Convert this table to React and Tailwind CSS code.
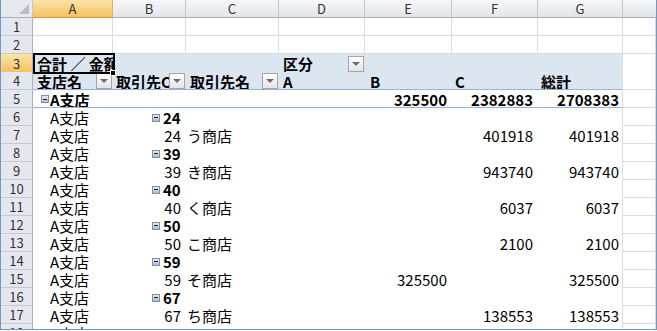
import clsx from 'clsx';

// Spreadsheet view of a pivot table: 合計 / 金額 by 支店名 × 取引先, split by 区分
const COLS = 'grid grid-cols-[32px_80px_73px_93px_86px_87px_86px_85px_1fr]';

const shops = [
  { code: 24, name: 'う商店', e: '', f: '401918', g: '401918' },
  { code: 39, name: 'き商店', e: '', f: '943740', g: '943740' },
  { code: 40, name: 'く商店', e: '', f: '6037', g: '6037' },
  { code: 50, name: 'こ商店', e: '', f: '2100', g: '2100' },
  { code: 59, name: 'そ商店', e: '325500', f: '', g: '325500' },
  { code: 67, name: 'ち商店', e: '', f: '138553', g: '138553' },
];

function RowNum({ n, active }) {
  return (
    <div
      className={clsx(
        'flex items-center justify-center border-r border-b border-r-[#a9b1bd] text-[13px] leading-[17px] text-[#333]',
        active ? 'border-b-[#d9a64e] bg-linear-to-b from-[#fbe3a8] to-[#f2c260]' : 'border-b-[#c3c9d1] bg-[#e4e8ee]'
      )}
    >
      {n}
    </div>
  );
}

function ColHead({ label, active, last }) {
  return (
    <div
      className={clsx(
        'flex items-center justify-center border-b text-[13px] leading-[17px] text-[#333]',
        !last && 'border-r',
        active
          ? 'border-b-[#e9973a] border-r-[#e1b25e] bg-linear-to-b from-[#fbe3a8] to-[#f2c260]'
          : 'border-b-[#a9b1bd] border-r-[#c5c9cf] bg-linear-to-b from-[#f6f7f9] to-[#e2e5e9]'
      )}
    >
      {label}
    </div>
  );
}

// plain worksheet cell with gridlines
function Cell() {
  return <div className="border-r border-b border-[#dadcdd] bg-white" />;
}

// pivot table cell: no gridlines, optional blue rule under it
function P({ children, head, line, edge, className }) {
  return (
    <div
      className={clsx(
        'flex h-full min-w-0 items-start overflow-hidden whitespace-nowrap pt-[1px]',
        head ? 'bg-[#dce6f1]' : 'bg-white',
        line && 'border-b border-b-[#95b3d7]',
        edge && 'border-r border-r-[#dadcdd]',
        className
      )}
    >
      {children}
    </div>
  );
}

function Drop() {
  return (
    <span className="ml-auto mr-[1px] flex h-[16px] w-[16px] shrink-0 items-center justify-center self-center border border-[#a5a5a5] bg-linear-to-b from-white to-[#e4e4e4]">
      <span className="h-0 w-0 border-x-[4px] border-t-[4px] border-x-transparent border-t-[#6e6e6e]" />
    </span>
  );
}

function Minus({ className }) {
  return (
    <span className={clsx('flex h-[8px] w-[8px] shrink-0 items-center justify-center self-center border border-[#7f90a9] bg-linear-to-b from-[#e4eaf2] to-[#aebcd0]', className)}>
      <span className="h-[1px] w-[4px] bg-[#1b2535]" />
    </span>
  );
}

export default function App() {
  return (
    <div className="h-[331px] w-[657px] overflow-hidden bg-white font-['Noto_Sans_CJK_JP',sans-serif] text-[15px] leading-[18px] text-black">
      <div className="h-[330px] overflow-hidden border-x border-b border-[#7596c4]">
        {/* column letters */}
        <div className={clsx(COLS, 'h-[18px]')}>
          <div className="relative border-r border-b border-r-[#c5c9cf] border-b-[#a9b1bd] bg-[#e6e9ee]">
            <span className="absolute right-[3px] bottom-[3px] h-0 w-0 border-b-[10px] border-l-[10px] border-b-[#b8bdc4] border-l-transparent" />
          </div>
          <ColHead label="A" active />
          <ColHead label="B" />
          <ColHead label="C" />
          <ColHead label="D" />
          <ColHead label="E" />
          <ColHead label="F" />
          <ColHead label="G" />
          <ColHead label="" last />
        </div>

        {[1, 2].map((n) => (
          <div key={n} className={clsx(COLS, 'h-[18px]')}>
            <RowNum n={n} />
            <Cell /><Cell /><Cell /><Cell /><Cell /><Cell /><Cell /><Cell />
          </div>
        ))}

        {/* pivot header: value field + column field */}
        <div className={clsx(COLS, 'h-[18px]')}>
          <RowNum n={3} active />
          <div className="relative z-10 h-full bg-[#dce6f1]">
            <span className="block overflow-hidden whitespace-nowrap pt-[1px] pl-[4px] font-bold">合計 ／ 金額</span>
            <span className="absolute -top-[1px] left-0 -right-[2px] -bottom-[1px] border-2 border-black" />
            <span className="absolute -right-[3px] -bottom-[3px] h-[6px] w-[6px] border border-white bg-black" />
          </div>
          <P head />
          <P head />
          <P head className="pl-[4px] font-bold">
            区分
            <Drop />
          </P>
          <P head />
          <P head />
          <P head edge />
          <Cell />
        </div>

        <div className={clsx(COLS, 'h-[18px]')}>
          <RowNum n={4} />
          <P head line className="pl-[4px] font-bold">
            <span className="min-w-0 flex-1 overflow-hidden">支店名</span>
            <Drop />
          </P>
          <P head line className="pl-[3px] font-bold">
            <span className="min-w-0 flex-1 overflow-hidden">取引先CD</span>
            <Drop />
          </P>
          <P head line className="pl-[4px] font-bold">
            <span className="min-w-0 flex-1 overflow-hidden">取引先名</span>
            <Drop />
          </P>
          <P head line className="pl-[4px] font-bold">A</P>
          <P head line className="pl-[5px] font-bold">B</P>
          <P head line className="pl-[3px] font-bold">C</P>
          <P head line edge className="pl-[3px] font-bold">総計</P>
          <Cell />
        </div>

        {/* branch total */}
        <div className={clsx(COLS, 'h-[18px]')}>
          <RowNum n={5} />
          <P line className="pl-[8px] font-bold">
            <Minus className="mr-[1px]" />
            A支店
          </P>
          <P line />
          <P line />
          <P line />
          <P line className="justify-end pr-[5px] font-bold">325500</P>
          <P line className="justify-end pr-[5px] font-bold">2382883</P>
          <P line edge className="justify-end pr-[3px] font-bold">2708383</P>
          <Cell />
        </div>

        {shops.map((s, i) => (
          <div key={s.code}>
            <div className={clsx(COLS, 'h-[18px]')}>
              <RowNum n={6 + i * 2} />
              <P className="pl-[17px]">A支店</P>
              <P className="pl-[39px] font-bold">
                <Minus className="mr-[3px]" />
                {s.code}
              </P>
              <P />
              <P />
              <P />
              <P />
              <P edge />
              <Cell />
            </div>
            <div className={clsx(COLS, 'h-[18px]')}>
              <RowNum n={7 + i * 2} />
              <P className="pl-[17px]">A支店</P>
              <P className="justify-end pr-[5px]">{s.code}</P>
              <P className="pl-[1px]">{s.name}</P>
              <P />
              <P className="justify-end pr-[5px]">{s.e}</P>
              <P className="justify-end pr-[5px]">{s.f}</P>
              <P edge className="justify-end pr-[3px]">{s.g}</P>
              <Cell />
            </div>
          </div>
        ))}

        <div className={clsx(COLS, 'h-[18px]')}>
          <RowNum n={18} />
          <P className="pl-[17px]">A支店</P>
          <P className="pl-[39px] font-bold">
            <Minus className="mr-[3px]" />
            71
          </P>
          <P />
          <P />
          <P />
          <P />
          <P edge />
          <Cell />
        </div>
      </div>
    </div>
  );
}
